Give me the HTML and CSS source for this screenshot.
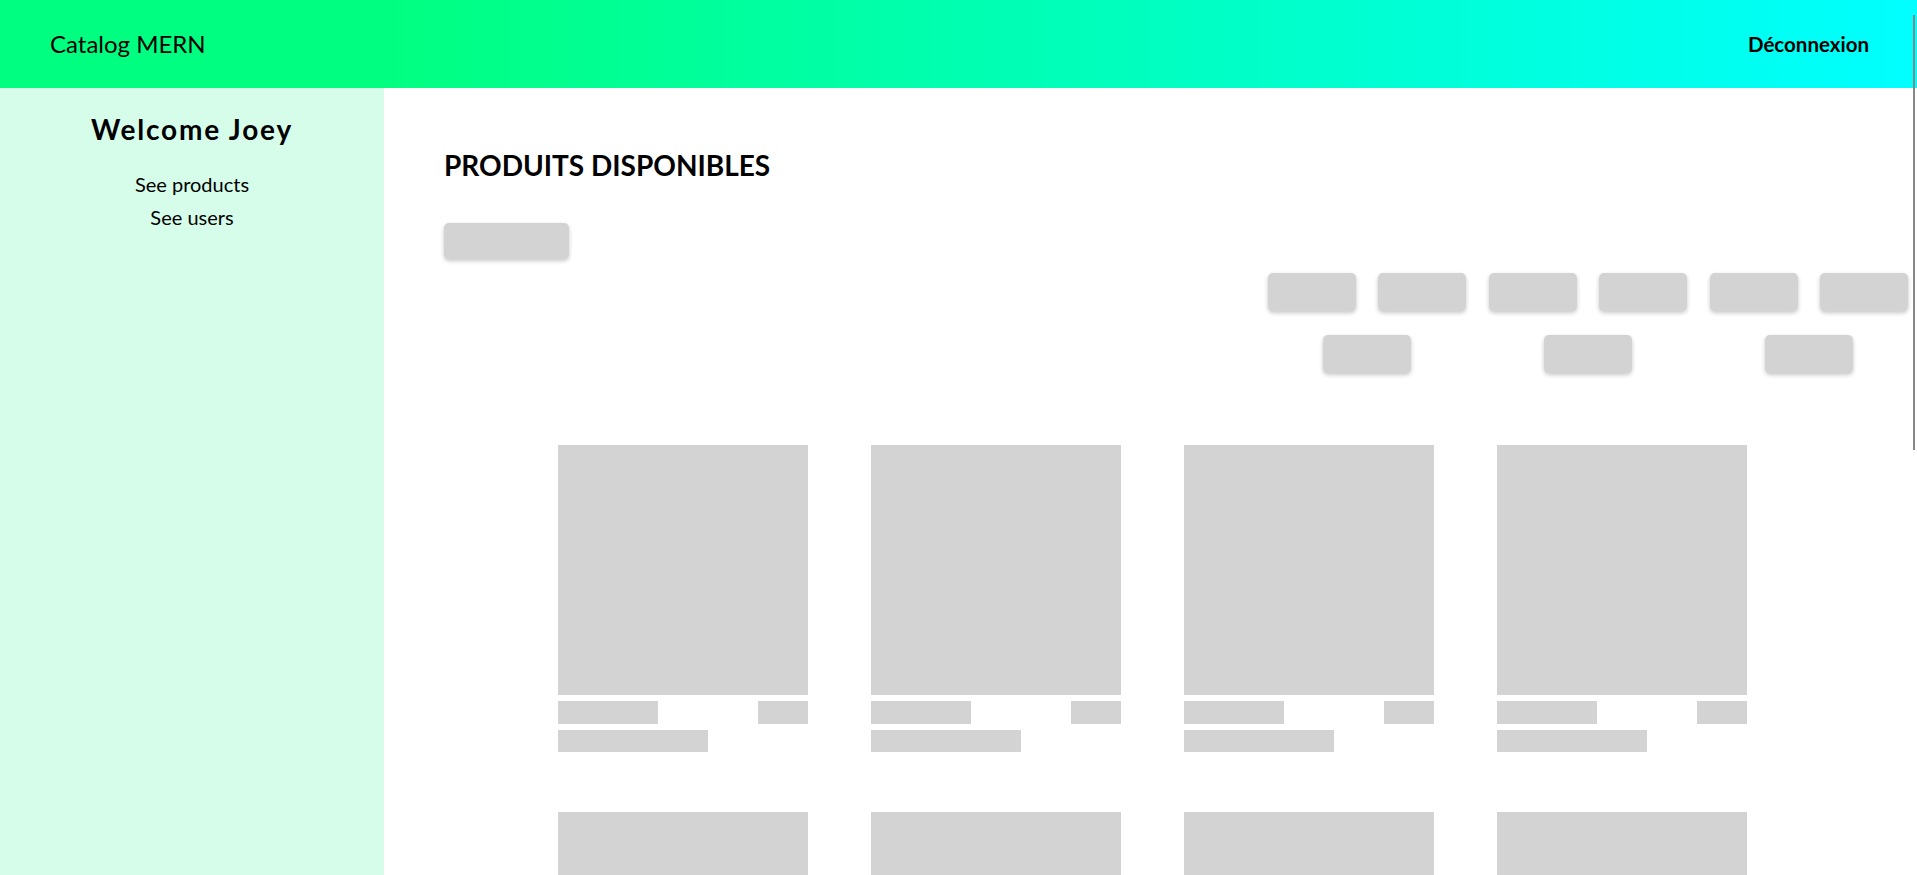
FILE: index.html
```html
<!DOCTYPE html>
<html lang="fr">
<head>
<meta charset="utf-8">
<title>Catalog MERN</title>
<link rel="stylesheet" href="styles.css">
</head>
<body>
<header class="topbar">
  <div class="brand">Catalog MERN</div>
  <a class="logout" href="#">Déconnexion</a>
</header>
<div class="layout">
  <aside class="sidebar">
    <h2 class="welcome">Welcome Joey</h2>
    <nav class="side-nav">
      <a href="#">See products</a>
      <a href="#">See users</a>
    </nav>
  </aside>
  <main class="main">
    <h1 class="title">PRODUITS DISPONIBLES</h1>
    <div class="sk-add"></div>
    <div class="filters">
      <div class="filter-group"><span class="sk-btn"></span><span class="sk-btn"></span><span class="sk-btn"></span></div>
      <div class="filter-group"><span class="sk-btn"></span><span class="sk-btn"></span><span class="sk-btn"></span></div>
      <div class="filter-group"><span class="sk-btn"></span><span class="sk-btn"></span><span class="sk-btn"></span></div>
    </div>
    <div class="grid">
      <div class="card"><div class="sk-img"></div><div class="sk-row"><span class="sk-name"></span><span class="sk-price"></span></div><div class="sk-desc"></div></div>
      <div class="card"><div class="sk-img"></div><div class="sk-row"><span class="sk-name"></span><span class="sk-price"></span></div><div class="sk-desc"></div></div>
      <div class="card"><div class="sk-img"></div><div class="sk-row"><span class="sk-name"></span><span class="sk-price"></span></div><div class="sk-desc"></div></div>
      <div class="card"><div class="sk-img"></div><div class="sk-row"><span class="sk-name"></span><span class="sk-price"></span></div><div class="sk-desc"></div></div>
      <div class="card"><div class="sk-img"></div><div class="sk-row"><span class="sk-name"></span><span class="sk-price"></span></div><div class="sk-desc"></div></div>
      <div class="card"><div class="sk-img"></div><div class="sk-row"><span class="sk-name"></span><span class="sk-price"></span></div><div class="sk-desc"></div></div>
      <div class="card"><div class="sk-img"></div><div class="sk-row"><span class="sk-name"></span><span class="sk-price"></span></div><div class="sk-desc"></div></div>
      <div class="card"><div class="sk-img"></div><div class="sk-row"><span class="sk-name"></span><span class="sk-price"></span></div><div class="sk-desc"></div></div>
      <div class="card"><div class="sk-img"></div><div class="sk-row"><span class="sk-name"></span><span class="sk-price"></span></div><div class="sk-desc"></div></div>
      <div class="card"><div class="sk-img"></div><div class="sk-row"><span class="sk-name"></span><span class="sk-price"></span></div><div class="sk-desc"></div></div>
      <div class="card"><div class="sk-img"></div><div class="sk-row"><span class="sk-name"></span><span class="sk-price"></span></div><div class="sk-desc"></div></div>
      <div class="card"><div class="sk-img"></div><div class="sk-row"><span class="sk-name"></span><span class="sk-price"></span></div><div class="sk-desc"></div></div>
    </div>
  </main>
</div>
<div class="scroll-thumb"></div>
</body>
</html>
```
FILE: styles.css
```css
html {
  scrollbar-width: none;
}
html::-webkit-scrollbar {
  display: none;
}
* {
  box-sizing: border-box;
}
body {
  margin: 0;
  font-family: "Trebuchet MS", Lato, sans-serif;
  color: #000;
  background: #fff;
}
.topbar {
  height: 88px;
  display: flex;
  align-items: center;
  justify-content: space-between;
  padding: 0 48px 0 50px;
  background: linear-gradient(to right, #00ff80 0%, #00ff80 20%, #00ffff 100%);
}
.brand {
  font-size: 24px;
  line-height: 30px;
}
.logout {
  font-size: 20.5px;
  font-weight: bold;
  color: #000;
  text-decoration: none;
}
.layout {
  display: flex;
  align-items: stretch;
}
.sidebar {
  width: 384px;
  flex: 0 0 384px;
  background: #d6fdea;
  padding-top: 25px;
  text-align: center;
}
.welcome {
  margin: 0;
  font-size: 28px;
  line-height: 32px;
  letter-spacing: 1.8px;
  font-weight: bold;
}
.side-nav {
  display: flex;
  flex-direction: column;
  align-items: center;
  margin-top: 23px;
}
.side-nav a {
  font-size: 20px;
  line-height: 33px;
  color: #000;
  text-decoration: none;
}
.main {
  flex: 1;
  padding: 60px 9px 80px 0;
}
.title {
  margin: 0 0 0 60px;
  font-size: 28px;
  line-height: 34px;
  font-weight: bold;
}
.sk-add {
  margin: 41px 0 0 60px;
  width: 125px;
  height: 36px;
  border-radius: 5px;
  background: #d3d3d3;
  box-shadow: 0 2px 4px rgba(0, 0, 0, 0.22);
}
.filters {
  margin-top: 14px;
  display: flex;
  justify-content: flex-end;
  gap: 23px;
}
.filter-group {
  width: 198px;
  display: flex;
  flex-wrap: wrap;
  justify-content: center;
  gap: 24px 22px;
}
.sk-btn {
  display: block;
  width: 88px;
  height: 38px;
  border-radius: 5px;
  background: #d3d3d3;
  box-shadow: 0 2px 4px rgba(0, 0, 0, 0.22);
}
.grid {
  margin-top: 72px;
  margin-right: -13px;
  display: grid;
  grid-template-columns: repeat(4, 250px);
  column-gap: 63px;
  row-gap: 60px;
  justify-content: center;
}
.card {
  display: flex;
  flex-direction: column;
  gap: 6px;
}
.sk-img {
  width: 250px;
  height: 250px;
  background: #d3d3d3;
}
.sk-row {
  display: flex;
  justify-content: space-between;
}
.sk-name {
  width: 100px;
  height: 23px;
  background: #d3d3d3;
}
.sk-price {
  width: 50px;
  height: 23px;
  background: #d3d3d3;
}
.sk-desc {
  width: 150px;
  height: 22px;
  background: #d3d3d3;
}
.scroll-thumb {
  position: fixed;
  top: 15px;
  right: 2px;
  width: 2px;
  height: 435px;
  background: #888;
}
```
